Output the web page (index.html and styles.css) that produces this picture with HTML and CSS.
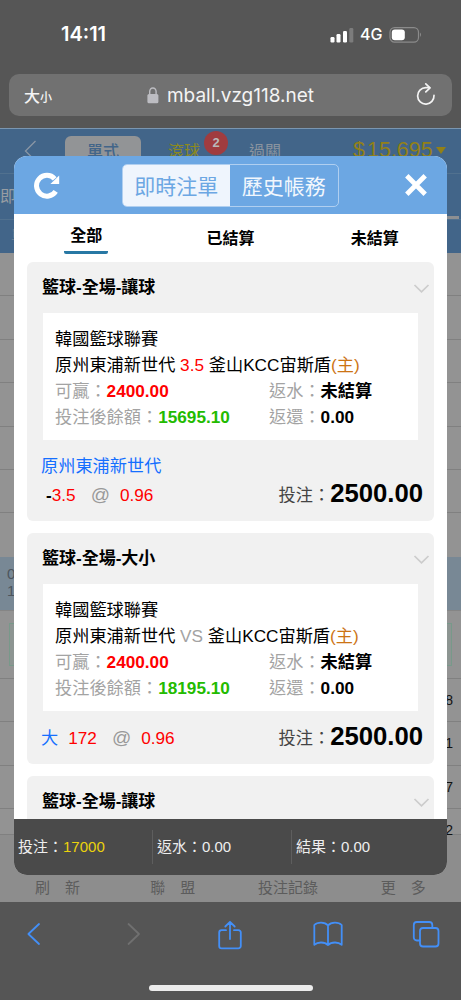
FILE: index.html
```html
<!DOCTYPE html>
<html lang="zh-Hant">
<head>
  <meta charset="UTF-8" />
  <meta name="viewport" content="width=device-width, initial-scale=1.0"/>
  <title>即時注單</title>
  <link rel="stylesheet" href="styles.css">
</head>
<body>

<!-- Status bar -->
<div class="status">
  <span class="clock">14:11</span>
  <div class="status-icons">
    <svg width="24" height="16" viewBox="0 0 24 16">
      <rect x="0.5" y="10" width="4" height="5.5" rx="1.2" fill="#fff"/>
      <rect x="6.5" y="7" width="4" height="8.5" rx="1.2" fill="#fff"/>
      <rect x="13" y="4" width="4" height="11.5" rx="1.2" fill="#fff"/>
      <rect x="19.3" y="1" width="4" height="14.5" rx="1.2" fill="#7c7c7c"/>
    </svg>
    <span class="network">4G</span>
    <svg width="34" height="18" viewBox="0 0 34 18">
      <rect x="1" y="1.7" width="28.5" height="14.4" rx="4.6" fill="none" stroke="#8b8b8b" stroke-width="1.2"/>
      <rect x="2.8" y="3.5" width="13" height="10.8" rx="3" fill="#fff"/>
      <path d="M31 6.6q2 2.2 0 4.4z" fill="#8b8b8b"/>
    </svg>
  </div>
</div>

<!-- Address bar -->
<div class="address">
  <span class="text-size">大<small>小</small></span>
  <div class="domain">
    <svg width="12" height="17" viewBox="0 0 12 17">
      <path d="M2.7 8V4.6a3.2 3.6 0 0 1 6.4 0V8" fill="none" stroke="#bdbdc2" stroke-width="1.4"/>
      <rect x="0.4" y="7" width="11" height="9.3" rx="1.6" fill="#bdbdc2"/>
    </svg>
    <span>mball.vzg118.net</span>
  </div>
  <svg width="20" height="24" viewBox="0 0 20 24" fill="none" stroke="#f4f4f4" stroke-width="1.7" stroke-linecap="round" stroke-linejoin="round">
    <path d="M18 12.400A8.200 8.200 0 1 1 9.800 4.700H13.500"/>
    <path d="M9.800 0.900l4.200 3.900-4.200 4"/>
  </svg>
</div>

<main class="page">
  <div class="game-nav">
    <svg class="back" width="13" height="19" viewBox="0 0 13 19" fill="none" stroke="#8a97a5" stroke-width="1.3"><path d="M11.5 1L1.5 11l8 8"/></svg>
    <span class="game-tab active">單式</span>
    <span class="game-tab live">滾球<b class="badge">2</b></span>
    <span class="game-tab">過關</span>
    <span class="balance">$<i>15,695</i></span>
    <span class="caret"></span>
  </div>
  <div class="game-sub">即</div>
  <div class="game-head">單</div>
  <div class="rows">
    <div class="row"></div>
    <div class="row"></div>
    <div class="row"></div>
    <div class="row"></div>
    <div class="row"></div>
    <div class="row"></div>
    <div class="row last"></div>
    <div class="row match">0<br>1</div>
    <div class="row promo"><div></div></div>
    <div class="row odds">8</div>
    <div class="row odds">1</div>
    <div class="row odds">7</div>
    <div class="row odds short">2</div>
  </div>
  <nav class="bottom-nav">
    <span>刷　新</span>
    <span>聯　盟</span>
    <span>投注記錄</span>
    <span>更　多</span>
  </nav>

  <!-- Bet list dialog -->
  <section class="dialog">
    <header class="dialog-head">
      <svg width="28" height="28" viewBox="0 0 28 28">
        <path d="M22.700 20.300A10.400 10.400 0 1 1 21.700 7.800" fill="none" stroke="#fff" stroke-width="5"/>
        <path d="M26.200 4.600v8.400H17.400z" fill="#fff"/>
      </svg>
      <div class="switch">
        <span class="on">即時注單</span>
        <span>歷史帳務</span>
      </div>
      <svg width="22" height="22" viewBox="0 0 22 22" stroke="#fff" stroke-width="4.8"><path d="M1.8 1.8l18.4 18.4M20.2 1.8L1.8 20.2"/></svg>
    </header>
    <div class="filters">
      <span class="active">全部</span>
      <span>已結算</span>
      <span>未結算</span>
    </div>
    <div class="bets">
      <article class="bet">
        <h2>籃球-全場-讓球<svg width="17" height="11" viewBox="0 0 17 11"><path d="M1.5 2l7 6.8 7-6.8"/></svg></h2>
        <div class="detail">
          <p>韓國籃球聯賽</p>
          <p>原州東浦新世代 <span class="red">3.5</span> 釜山KCC宙斯盾<span class="home">(主)</span></p>
          <div class="pair"><p><span class="label">可贏：</span><b class="red">2400.00</b></p><p><span class="label">返水：</span><b>未結算</b></p></div>
          <div class="pair"><p><span class="label">投注後餘額：</span><b class="green">15695.10</b></p><p><span class="label">返還：</span><b>0.00</b></p></div>
        </div>
        <div class="pick tall">
          <div>
            <p class="team">原州東浦新世代</p>
            <p class="line handicap"><b>-</b><span class="red">3.5</span><span class="at">@</span><span class="red">0.96</span></p>
          </div>
          <p class="stake">投注：<b>2500.00</b></p>
        </div>
      </article>
      <article class="bet">
        <h2>籃球-全場-大小<svg width="17" height="11" viewBox="0 0 17 11"><path d="M1.5 2l7 6.8 7-6.8"/></svg></h2>
        <div class="detail">
          <p>韓國籃球聯賽</p>
          <p>原州東浦新世代 <span class="label">VS</span> 釜山KCC宙斯盾<span class="home">(主)</span></p>
          <div class="pair"><p><span class="label">可贏：</span><b class="red">2400.00</b></p><p><span class="label">返水：</span><b>未結算</b></p></div>
          <div class="pair"><p><span class="label">投注後餘額：</span><b class="green">18195.10</b></p><p><span class="label">返還：</span><b>0.00</b></p></div>
        </div>
        <div class="pick">
          <p class="line"><span class="team total">大</span><span class="red">172</span><span class="at">@</span><span class="red">0.96</span></p>
          <p class="stake">投注：<b>2500.00</b></p>
        </div>
      </article>
      <article class="bet">
        <h2>籃球-全場-讓球<svg width="17" height="11" viewBox="0 0 17 11"><path d="M1.5 2l7 6.8 7-6.8"/></svg></h2>
      </article>
    </div>
    <footer class="totals">
      <span>投注：<em>17000</em></span>
      <span>返水：0.00</span>
      <span>結果：0.00</span>
    </footer>
  </section>
</main>

<!-- Browser toolbar -->
<div class="toolbar">
  <div class="tools">
    <svg width="24" height="28" viewBox="0 0 24 28"><path d="M17 4L6.4 14 17 24"/></svg>
    <svg class="off" width="24" height="28" viewBox="0 0 24 28"><path d="M7.5 4L18 14 7.5 24"/></svg>
    <svg width="24" height="30" viewBox="0 0 24 30"><path d="M8 10.2H3.6A2.4 2.4 0 0 0 1.2 12.6V26a2.4 2.4 0 0 0 2.4 2.4h16.8a2.4 2.4 0 0 0 2.4-2.4V12.600a2.4 2.4 0 0 0-2.400-2.400H16M12 19V2M7.300 6.500L12 1.800l4.700 4.700"/></svg>
    <svg width="30" height="28" viewBox="0 0 30 28"><path d="M15 25V5.500C13 3 10.500 2.600 8 2.600S3.200 3 1.300 5v19.800c2-1.800 4.200-2.300 6.700-2.300s5 .5 7 2.500c2-2 4.500-2.500 7-2.500s4.700.5 6.700 2.300V5c-1.900-2-4.200-2.400-6.700-2.400S17 3 15 5.500"/></svg>
    <svg width="28" height="28" viewBox="0 0 28 28"><rect x="8" y="8" width="18.500" height="18.500" rx="3"/><path d="M8 20.500H4.800a3 3 0 0 1-3-3V5a3 3 0 0 1 3-3h12.500a3 3 0 0 1 3 3v3"/></svg>
  </div>
  <div class="home-bar"></div>
</div>

</body>
</html>
```
FILE: styles.css
```css
* {
  box-sizing: border-box;
}
body {
  margin: 0;
  height: 1000px;
  display: flex;
  flex-direction: column;
  overflow: hidden;
  background: #565656;
  color: #000;
  font-family: "Liberation Sans", "Noto Sans CJK TC", sans-serif;
}
p, h2 {
  margin: 0;
}
svg {
  display: block;
  flex: none;
}

/* Status bar */
.status {
  height: 74px;
  padding: 22px 38px 0 61px;
  display: flex;
  justify-content: space-between;
  align-items: flex-start;
  color: #fff;
  font-family: Inter, sans-serif;
}
.clock {
  font-size: 20px;
  font-weight: 600;
  line-height: 25px;
}
.status-icons {
  display: flex;
  align-items: center;
  padding-top: 3px;
  gap: 6px;
}
.network {
  width: 23px;
  font-size: 16px;
  font-weight: 500;
  line-height: 19px;
}

/* Address bar */
.address {
  height: 42px;
  margin: 0 9px 12px;
  padding: 0 16px 0 15px;
  border-radius: 10px;
  background: #717171;
  color: #f4f4f4;
  display: flex;
  align-items: center;
  justify-content: space-between;
}
.text-size {
  width: 31px;
  font-size: 16px;
  font-weight: 500;
  white-space: nowrap;
}
.text-size small {
  font-size: 12px;
}
.domain {
  display: flex;
  align-items: center;
  gap: 8px;
  margin-right: 10px;
  font: 19px Inter, sans-serif;
}

/* Betting page under the dialog */
.page {
  position: relative;
  height: 774px;
  background: #939393;
  border-top: 1px solid #7a96b1;
}
.game-nav {
  height: 45px;
  background: #426589;
  border-bottom: 1px solid #51718f;
  display: flex;
  align-items: flex-start;
  color: #8a949f;
  font-size: 16px;
}
.back {
  margin: 11px 0 0 24px;
}
.game-tab {
  line-height: 24px;
  padding-top: 11px;
  position: relative;
}
.game-tab.active {
  width: 76px;
  height: 36px;
  margin: 7px 27px 0 28px;
  padding-top: 4px;
  border-radius: 6px;
  background: #929496;
  color: #426589;
  font-weight: 500;
  text-align: center;
}
.game-tab.live {
  width: 81px;
  color: #8c8a1e;
}
.badge {
  position: absolute;
  left: 36px;
  top: 2px;
  width: 24px;
  height: 24px;
  border-radius: 50%;
  background: #a03c3f;
  color: #b9b9b9;
  font-size: 13px;
  text-align: center;
}
.balance {
  width: 83px;
  margin-left: 72px;
  padding-top: 8px;
  color: #928017;
  font-size: 21.500px;
  line-height: 26px;
  white-space: nowrap;
}
.balance i {
  font-style: normal;
  margin-left: 2px;
}
.caret {
  margin-top: 18px;
  border: 5px solid transparent;
  border-top: 7px solid #928017;
  border-bottom: 0;
}
.game-sub {
  height: 46px;
  background: linear-gradient(#8d8f92, #8d8f92) 447px 42px / 12px 3px no-repeat #426589;
  border-bottom: 1px solid #51718f;
  color: #979da3;
  font-size: 16px;
  line-height: 46px;
}
.game-head {
  height: 33px;
  padding-left: 11px;
  background: #426589;
  color: #667d94;
  font-size: 14px;
  line-height: 30px;
}
.row {
  height: 43.400px;
  border-bottom: 1px solid #808080;
}
.row.last {
  border-bottom: 0;
}
.row.match {
  height: 54px;
  padding: 8px 7px;
  background: #788895;
  border-bottom-color: #858585;
  color: #4c555d;
  font-size: 15px;
  line-height: 17.500px;
}
.row.promo {
  height: 68px;
  padding: 12px 9px;
}
.row.promo div {
  height: 43px;
  border: 1px solid #78998a;
  background: #8d9592;
}
.row.odds {
  padding-right: 8px;
  color: #111;
  font-size: 14px;
  line-height: 43px;
  text-align: right;
}
.row.odds.short {
  height: 26px;
}
.bottom-nav {
  height: 67px;
  padding-top: 42px;
  background: #8d8d8d;
  display: grid;
  grid-template-columns: repeat(4, 1fr);
  color: #5c5c5c;
  font-size: 15px;
  line-height: 22px;
  text-align: center;
}

/* Dialog */
.dialog {
  position: absolute;
  left: 14px;
  top: 27px;
  width: 433px;
  height: 719px;
  border-radius: 13px;
  background: #fff;
  overflow: hidden;
  display: flex;
  flex-direction: column;
}
.dialog-head {
  height: 58px;
  flex: none;
  padding: 0 20px 0 19px;
  background: #6ca7e3;
  display: flex;
  align-items: center;
  justify-content: space-between;
}
.switch {
  width: 217px;
  height: 43px;
  margin-right: 6px;
  border: 1px solid #b0cff0;
  border-radius: 5px;
  overflow: hidden;
  display: flex;
  color: #f2f7fd;
  font-size: 21px;
  line-height: 43px;
  text-align: center;
}
.switch span {
  flex: 1;
}
.switch .on {
  background: #eff5fd;
  color: #6ca7e3;
}
.filters {
  height: 48px;
  flex: none;
  display: grid;
  grid-template-columns: repeat(3, 1fr);
  justify-items: center;
  font-size: 16px;
  font-weight: bold;
  line-height: 49px;
}
.filters .active {
  height: 40px;
  padding: 0 6px;
  border-bottom: 3px solid #2878a4;
  border-radius: 2px;
  line-height: 44px;
}
.bets {
  flex: 1;
  min-height: 0;
  overflow: hidden;
  padding: 0 13px;
}
.bet {
  margin-bottom: 12px;
  padding: 0 16px;
  border-radius: 6px;
  background: #f1f1f1;
  font-size: 17.200px;
  line-height: 26px;
}
.bet h2 {
  height: 51px;
  padding-top: 1px;
  margin: 0 -12px 0 -1px;
  display: flex;
  align-items: center;
  justify-content: space-between;
  font-size: 17px;
}
.bet h2 svg {
  fill: none;
  stroke: #ccc;
  stroke-width: 1.700;
}
.detail {
  height: 127px;
  padding: 13px 12px 10px;
  background: #fff;
  white-space: nowrap;
}
.pair {
  display: grid;
  grid-template-columns: 214px 1fr;
}
.label {
  color: #a3a3a3;
}
.red {
  color: #f00;
}
.green {
  color: #23bb00;
}
.home {
  color: #cc7414;
}
.pick {
  height: 53px;
  margin: 0 -5px 0 -2px;
  display: flex;
  align-items: center;
  justify-content: space-between;
}
.pick.tall {
  height: 81px;
  align-items: flex-end;
  padding-bottom: 13px;
}
.team {
  color: #156fff;
}
.tall .team {
  margin-bottom: 3px;
}
.line {
  display: flex;
}
.line.handicap {
  padding-left: 5px;
}
.total {
  margin-right: 10px;
}
.at {
  margin: 0 10px 0 15px;
  color: #999;
  font-size: 19px;
}
.stake {
  display: flex;
  align-items: center;
  color: #444;
}
.stake b {
  padding-bottom: 3px;
  color: #000;
  font-size: 25.700px;
  line-height: 23px;
}
.totals {
  height: 56px;
  flex: none;
  padding: 11px 0;
  background: #4a4a4a;
  color: #eee;
  display: grid;
  grid-template-columns: 139px 139px 1fr;
  font-size: 15px;
  line-height: 34px;
}
.totals span {
  padding-left: 4px;
  border-right: 1px solid #5e5e5e;
}
.totals span:last-child {
  border: 0;
}
.totals em {
  color: #ebd20c;
  font-style: normal;
}

/* Browser toolbar */
.toolbar {
  flex: 1;
  background: #555;
}
.tools {
  padding: 18px 21px 0 22px;
  height: 83px;
  display: grid;
  grid-template-columns: 99px 92px 95px 98px 28px;
  align-items: start;
  fill: none;
  stroke: #438ff7;
  stroke-width: 1.800;
  stroke-linejoin: round;
  stroke-linecap: round;
}
.tools .off {
  stroke: #707070;
}
.tools svg:nth-child(3) {
  margin-left: 5px;
}
.tools svg:nth-child(4) {
  margin-left: 5px;
}
.tools svg:nth-child(5) {
  margin-left: 6px;
}
.home-bar {
  width: 164px;
  height: 6px;
  margin: 0 auto;
  border-radius: 3px;
  background: #ececec;
}
```
